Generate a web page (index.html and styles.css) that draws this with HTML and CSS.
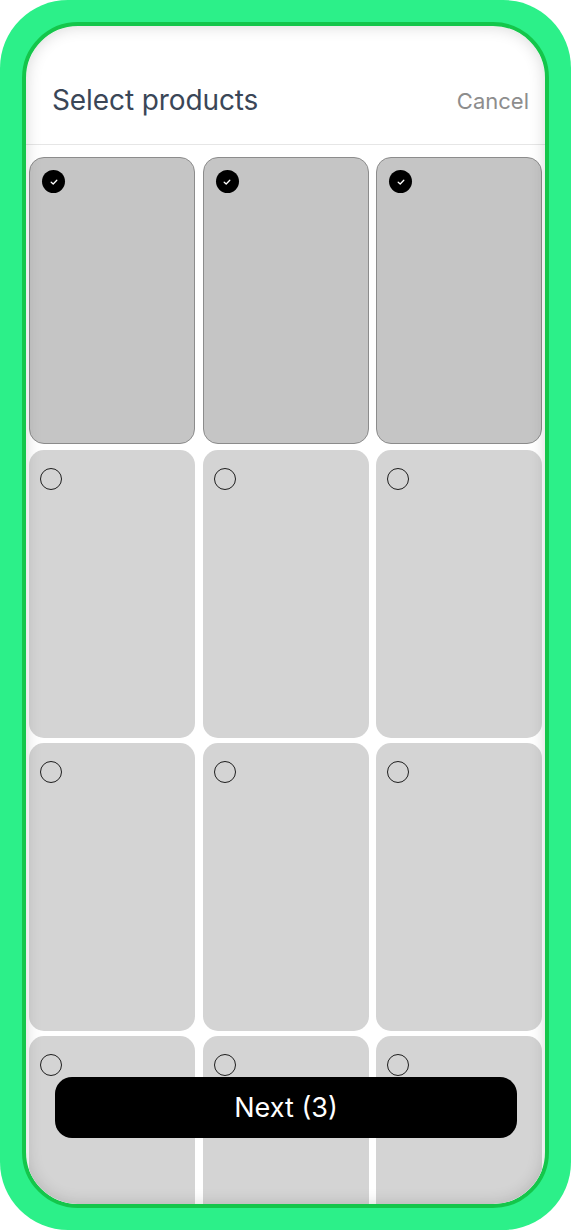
FILE: index.html
```html
<!DOCTYPE html>
<html lang="en">
<head>
<meta charset="utf-8">
<title>Select products</title>
<link rel="stylesheet" href="styles.css">
</head>
<body>
<div class="device">
  <div class="screen">
    <header class="header">
      <h1 class="title">Select products</h1>
      <button class="cancel" type="button">Cancel</button>
    </header>
    <div class="grid">
      <div class="card selected"><span class="check"><svg viewBox="0 0 10 10" width="10" height="10"><path d="M2.2 5.2 L4.2 7 L7.8 3.2" fill="none" stroke="#fff" stroke-width="1.3" stroke-linecap="round" stroke-linejoin="round"/></svg></span></div>
      <div class="card selected"><span class="check"><svg viewBox="0 0 10 10" width="10" height="10"><path d="M2.2 5.2 L4.2 7 L7.8 3.2" fill="none" stroke="#fff" stroke-width="1.3" stroke-linecap="round" stroke-linejoin="round"/></svg></span></div>
      <div class="card selected"><span class="check"><svg viewBox="0 0 10 10" width="10" height="10"><path d="M2.2 5.2 L4.2 7 L7.8 3.2" fill="none" stroke="#fff" stroke-width="1.3" stroke-linecap="round" stroke-linejoin="round"/></svg></span></div>
      <div class="card"><span class="radio"></span></div>
      <div class="card"><span class="radio"></span></div>
      <div class="card"><span class="radio"></span></div>
      <div class="card"><span class="radio"></span></div>
      <div class="card"><span class="radio"></span></div>
      <div class="card"><span class="radio"></span></div>
      <div class="card"><span class="radio"></span></div>
      <div class="card"><span class="radio"></span></div>
      <div class="card"><span class="radio"></span></div>
    </div>
    <button class="next" type="button">Next (3)</button>
  </div>
</div>
</body>
</html>
```

FILE: styles.css
```css
* { box-sizing: border-box; }

html, body {
  margin: 0;
  padding: 0;
  background: #ffffff;
}

body {
  font-family: Inter, "Noto Sans", "Liberation Sans", sans-serif;
}

.device {
  width: 571px;
  height: 1230px;
  padding: 22px;
  border-radius: 68px;
  background: #2cf089;
}

.screen {
  position: relative;
  height: 100%;
  border: 4px solid #14c64b;
  border-radius: 56px;
  background: #ffffff;
  overflow: hidden;
  display: flex;
  flex-direction: column;
}

.screen::after {
  content: "";
  position: absolute;
  inset: 0;
  border-radius: 52px;
  box-shadow: inset 0 0 16px rgba(0, 0, 0, 0.16);
  pointer-events: none;
}

.header {
  flex: none;
  height: 119px;
  display: flex;
  align-items: flex-end;
  justify-content: space-between;
  padding: 0 16px 27px 26px;
  border-bottom: 1px solid #e6e6e6;
}

.title {
  margin: 0;
  font-size: 28px;
  font-weight: 400;
  line-height: 34px;
  color: #3a4657;
  letter-spacing: -0.1px;
}

.cancel {
  border: 0;
  background: none;
  padding: 0;
  font-family: inherit;
  font-size: 22px;
  line-height: 30px;
  color: #8d8d8d;
  margin-bottom: 1px;
}

.grid {
  flex: none;
  display: grid;
  grid-template-columns: repeat(3, 1fr);
  grid-auto-rows: 288px;
  column-gap: 7.5px;
  row-gap: 5px;
  padding: 12px 3px 0 3px;
}

.card {
  position: relative;
  border-radius: 15px;
  background: #d4d4d4;
}

.card.selected {
  background: #c5c5c5;
  border: 1px solid #8c8c8c;
  height: 287px;
}

.check {
  position: absolute;
  left: 12px;
  top: 12px;
  width: 23px;
  height: 23px;
  border-radius: 50%;
  background: #000000;
  display: flex;
  align-items: center;
  justify-content: center;
}

.check svg { display: block; }

.radio {
  position: absolute;
  left: 11px;
  top: 18px;
  width: 22px;
  height: 22px;
  border-radius: 50%;
  border: 1.5px solid #1e1e1e;
}

.next {
  position: absolute;
  left: 29px;
  right: 28px;
  bottom: 66px;
  height: 61px;
  border: 0;
  border-radius: 17px;
  background: #000000;
  color: #ffffff;
  font-family: inherit;
  font-size: 27px;
  font-weight: 400;
  z-index: 2;
}
```
